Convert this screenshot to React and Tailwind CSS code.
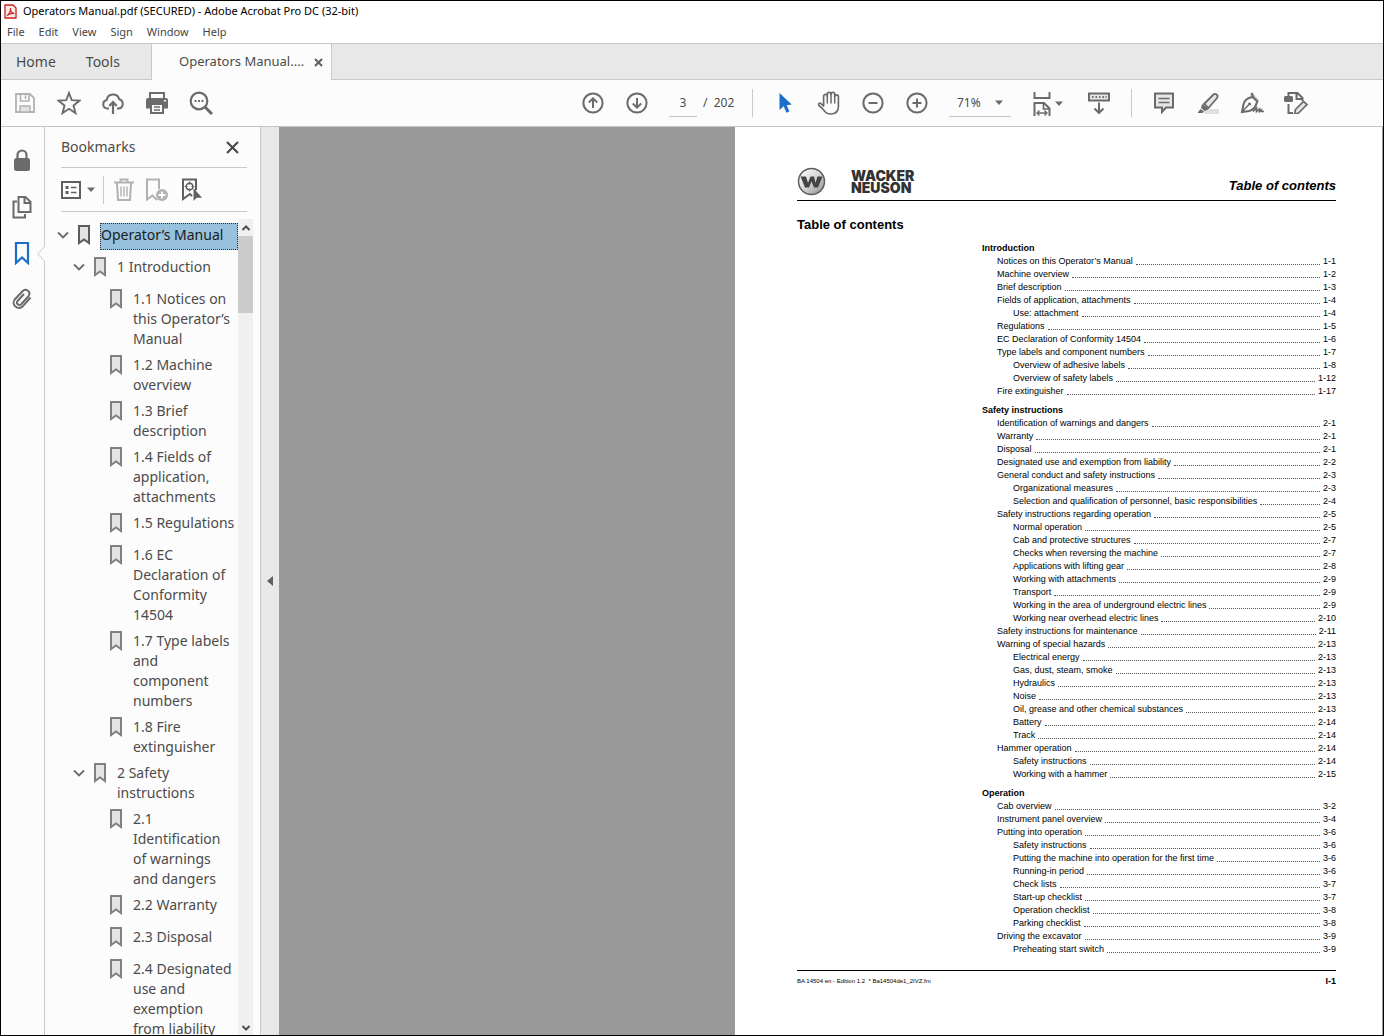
const ui = 'font-["Noto_Sans","Open_Sans",sans-serif]';

function Icon({ w = 24, h = 24, children, className = "" }) {
  return (
    <svg
      width={w}
      height={h}
      viewBox={`0 0 ${w} ${h}`}
      fill="none"
      stroke="currentColor"
      strokeWidth="2"
      aria-hidden="true"
      className={`shrink-0 ${className}`}
    >
      {children}
    </svg>
  );
}

function ToolButton({ label, className = "w-11", children }) {
  return (
    <button
      type="button"
      aria-label={label}
      className={`flex h-11 shrink-0 items-center justify-center text-[#6b6b6b] ${className}`}
    >
      {children}
    </button>
  );
}

function Caret() {
  return (
    <svg width="8" height="5" viewBox="0 0 8 5" aria-hidden="true" className="shrink-0">
      <path d="M0 0.5h8L4 5z" fill="#6b6b6b" />
    </svg>
  );
}

const SaveIcon = () => (
  <Icon w={20} h={20} className="text-[#b1b1b1]">
    <path d="M1 1h14l4 4v14H1z" strokeWidth="1.8" />
    <path d="M5.5 1v7h8.5V1M10.5 2.5v3.5" strokeWidth="1.6" />
    <path d="M5 19v-6h10v6z" fill="#e3e3e3" strokeWidth="1.4" />
  </Icon>
);

const StarIcon = () => (
  <Icon>
    <path d="M12 2l2.7 7.2 7.9.4-6.1 4.9 2 7.6L12 17.8l-6.500 4.300 2-7.600-6.100-4.900 7.900-.400z" strokeWidth="1.900" />
  </Icon>
);

const CloudIcon = () => (
  <Icon w={22} h={22}>
    <path d="M7 16.5H5.300A4.300 4.300 0 0 1 4.700 8a6.400 6.400 0 0 1 12.500-.700 4.700 4.700 0 0 1-.500 9.200H15" />
    <path d="M11 22V10.500M7.300 14l3.700-3.800 3.700 3.800" strokeWidth="2.200" />
  </Icon>
);

const PrintIcon = () => (
  <Icon w={22} h={22}>
    <path d="M4 7V1h14v6" />
    <path d="M2 6h18q2 0 2 2v8.500h-4V12H4v4.500H0V8q0-2 2-2z" fill="currentColor" stroke="none" />
    <rect x="18" y="8" width="2" height="1.500" fill="#fff" stroke="none" />
    <path d="M5 12v9h12v-9z" fill="#fcfcfc" />
    <path d="M8 15h6M8 18h6" strokeWidth="1.300" />
  </Icon>
);

const SearchIcon = () => (
  <Icon>
    <circle cx="10" cy="10" r="8.300" strokeWidth="2.200" />
    <path d="M16 16l7 7" strokeWidth="3" />
    <path d="M5.500 10h2M9 10h2M12.500 10h2" strokeWidth="2" />
  </Icon>
);

const CircleIcon = ({ children }) => (
  <Icon w={22} h={22}>
    <circle cx="11" cy="11" r="9.600" strokeWidth="2" />
    {children}
  </Icon>
);

const CursorIcon = () => (
  <Icon w={14} h={22}>
    <path d="M1.500 1v17l4.200-3.700 2.700 6.500 3-1.300-2.700-6.300 5-.600z" fill="#1b6fc9" stroke="none" />
  </Icon>
);

const HandIcon = () => (
  <Icon>
    <path
      d="M6.600 15V5.300a1.850 1.850 0 0 1 3.700 0V3.200a1.850 1.850 0 0 1 3.700 0a1.850 1.850 0 0 1 3.700 0V5.700a1.850 1.850 0 0 1 3.700 0V15.500c0 4.700-3 7.500-7.700 7.500-4 0-6-2-7.500-4.600L1.800 14.300c-.800-1.600.800-2.700 2.200-1.600z"
      strokeWidth="1.700"
      strokeLinejoin="round"
    />
    <path d="M10.300 5v7.500M14 3v9.500M17.700 5v7.500" strokeWidth="1.500" />
  </Icon>
);

const FitIcon = () => (
  <Icon w={18} h={25}>
    <path d="M1.500 1v6h15V1" />
    <path d="M1.500 25V12h9.500l5.500 5.500V25" />
    <path d="M10.500 12v6h6" strokeWidth="1.700" />
    <path d="M4 22h10M6.500 19.500L4 22l2.500 2.500M11.500 19.500L14 22l-2.500 2.500" strokeWidth="1.400" />
  </Icon>
);

const KeyboardIcon = () => (
  <Icon w={22} h={22}>
    <rect x="1" y="1.500" width="20" height="7" fill="#e6e6e6" />
    <path d="M4 5h1.500M7.500 5H9M11 5h1.500M14.500 5H16M17.500 5h1" />
    <path d="M11 10.500V21M6.500 16.500L11 21l4.500-4.500" />
  </Icon>
);

const CommentIcon = () => (
  <Icon w={20} h={22}>
    <path d="M1 1.500h18v14h-7l-4 4.500v-4.500H1z" fill="#e6e6e6" />
    <path d="M4.500 6.500h11M4.500 10.500h11" strokeWidth="1.500" />
  </Icon>
);

const HighlightIcon = () => (
  <Icon w={24} h={22}>
    <rect x="8" y="17" width="15" height="5" fill="#dfdfdf" stroke="none" />
    <path d="M8 12L17.500 2.500c1.500-1.500 5.500.500 3.500 3.500l-8.500 10z" fill="#e6e6e6" strokeWidth="1.800" />
    <path d="M6.500 12.500l5.500 4.500-3.500 1.500-3-2.500z" fill="currentColor" strokeWidth="1" />
    <path d="M4.500 17l3.500 2.500L6.500 21H1.500z" fill="currentColor" stroke="none" />
  </Icon>
);

const PenIcon = () => (
  <Icon w={24} h={22}>
    <path d="M13 1l6.500 6.500L17 11 9 3.500z" fill="#dfdfdf" stroke="none" />
    <path d="M11.500 1l2 4.500 4.500 4.500" strokeWidth="2.200" />
    <path d="M13 5C7.500 5.500 4.500 8 3.500 12.500L2 20l7-1c4-1 7-4.500 8-9" strokeWidth="2.100" />
    <path d="M2 20l6.500-7" strokeWidth="1.400" />
    <circle cx="9.500" cy="12" r="1.600" fill="currentColor" stroke="none" />
    <path d="M13 19.500l3.500-3.500v3.500l3-2.500v2.500l2-1.500v1.500H24" strokeWidth="1.700" />
  </Icon>
);

const EditPageIcon = () => (
  <Icon w={24} h={22}>
    <path d="M4.500 4V1h9l5 5v3M12.500 1v6h6" />
    <rect x="0" y="4" width="9" height="6" rx="1.500" fill="currentColor" stroke="none" />
    <path d="M4.500 12v9H9" />
    <path d="M11.500 17.500l8-8 3.500 3-8.500 8.500-4 1z" fill="#e6e6e6" strokeWidth="1.700" />
  </Icon>
);

const BookmarkIcon = ({ strong }) => (
  <Icon w={12} h={20} className={strong ? "text-[#5a5a5a]" : "text-[#808080]"}>
    <path d="M1 1h10v17l-5-3.500L1 18z" fill="#e3e3e3" />
  </Icon>
);

const Chevron = () => (
  <Icon w={12} h={8} className="text-[#6b6b6b]">
    <path d="M1 1.500l5 5 5-5" strokeWidth="1.800" />
  </Icon>
);

const bookmarks = [
  { level: 0, text: "Operator’s Manual", open: true, selected: true },
  { level: 1, text: "1 Introduction", open: true },
  { level: 2, text: "1.1 Notices on\nthis Operator’s\nManual" },
  { level: 2, text: "1.2 Machine\noverview" },
  { level: 2, text: "1.3 Brief\ndescription" },
  { level: 2, text: "1.4 Fields of\napplication,\nattachments" },
  { level: 2, text: "1.5 Regulations" },
  { level: 2, text: "1.6 EC\nDeclaration of\nConformity\n14504" },
  { level: 2, text: "1.7 Type labels\nand\ncomponent\nnumbers" },
  { level: 2, text: "1.8 Fire\nextinguisher" },
  { level: 1, text: "2 Safety\ninstructions", open: true },
  { level: 2, text: "2.1\nIdentification\nof warnings\nand dangers" },
  { level: 2, text: "2.2 Warranty" },
  { level: 2, text: "2.3 Disposal" },
  { level: 2, text: "2.4 Designated\nuse and\nexemption\nfrom liability" },
];

const indent = ["pl-3", "pl-7", "pl-11"];

const sections = [
  {
    title: "Introduction",
    rows: [
      [1, "Notices on this Operator’s Manual", "1-1"],
      [1, "Machine overview", "1-2"],
      [1, "Brief description", "1-3"],
      [1, "Fields of application, attachments", "1-4"],
      [2, "Use: attachment", "1-4"],
      [1, "Regulations", "1-5"],
      [1, "EC Declaration of Conformity 14504", "1-6"],
      [1, "Type labels and component numbers", "1-7"],
      [2, "Overview of adhesive labels", "1-8"],
      [2, "Overview of safety labels", "1-12"],
      [1, "Fire extinguisher", "1-17"],
    ],
  },
  {
    title: "Safety instructions",
    rows: [
      [1, "Identification of warnings and dangers", "2-1"],
      [1, "Warranty", "2-1"],
      [1, "Disposal", "2-1"],
      [1, "Designated use and exemption from liability", "2-2"],
      [1, "General conduct and safety instructions", "2-3"],
      [2, "Organizational measures", "2-3"],
      [2, "Selection and qualification of personnel, basic responsibilities", "2-4"],
      [1, "Safety instructions regarding operation", "2-5"],
      [2, "Normal operation", "2-5"],
      [2, "Cab and protective structures", "2-7"],
      [2, "Checks when reversing the machine", "2-7"],
      [2, "Applications with lifting gear", "2-8"],
      [2, "Working with attachments", "2-9"],
      [2, "Transport", "2-9"],
      [2, "Working in the area of underground electric lines", "2-9"],
      [2, "Working near overhead electric lines", "2-10"],
      [1, "Safety instructions for maintenance", "2-11"],
      [1, "Warning of special hazards", "2-13"],
      [2, "Electrical energy", "2-13"],
      [2, "Gas, dust, steam, smoke", "2-13"],
      [2, "Hydraulics", "2-13"],
      [2, "Noise", "2-13"],
      [2, "Oil, grease and other chemical substances", "2-13"],
      [2, "Battery", "2-14"],
      [2, "Track", "2-14"],
      [1, "Hammer operation", "2-14"],
      [2, "Safety instructions", "2-14"],
      [2, "Working with a hammer", "2-15"],
    ],
  },
  {
    title: "Operation",
    rows: [
      [1, "Cab overview", "3-2"],
      [1, "Instrument panel overview", "3-4"],
      [1, "Putting into operation", "3-6"],
      [2, "Safety instructions", "3-6"],
      [2, "Putting the machine into operation for the first time", "3-6"],
      [2, "Running-in period", "3-6"],
      [2, "Check lists", "3-7"],
      [2, "Start-up checklist", "3-7"],
      [2, "Operation checklist", "3-8"],
      [2, "Parking checklist", "3-8"],
      [1, "Driving the excavator", "3-9"],
      [2, "Preheating start switch", "3-9"],
    ],
  },
];

function TitleAndMenu() {
  return (
    <header className="shrink-0 bg-white text-[11px]">
      <div className="flex h-[21px] items-center gap-1.5 pl-[3px] text-black">
        <svg width="13" height="15" viewBox="0 0 13 15" aria-hidden="true">
          <path d="M1 1h8l3 3v10H1z" fill="#fdecec" stroke="#c8201c" strokeWidth="1.300" />
          <path
            d="M3 11.500c2-1 4-4.500 3.500-7.500-.5 3 1.500 5.500 4 5.500-2.500-.600-5 .300-7.500 2z"
            fill="none"
            stroke="#d3231f"
            strokeWidth="1.200"
          />
        </svg>
        <h1 className="whitespace-nowrap">
          Operators Manual.pdf (SECURED) - Adobe Acrobat Pro DC (32-bit)
        </h1>
      </div>
      <nav aria-label="Menu" className="flex h-[21px] items-center gap-3.5 pl-1.5 text-[#444]">
        {["File", "Edit", "View", "Sign", "Window", "Help"].map((m) => (
          <button key={m} type="button">
            {m}
          </button>
        ))}
      </nav>
    </header>
  );
}

function Tabs() {
  return (
    <nav
      aria-label="Tabs"
      className="flex h-[37px] shrink-0 border-t border-[#c9c9c9] bg-[#e8e8e8] text-[#4b4b4b]"
    >
      <div className="flex w-[150px] items-center gap-[30px] border-b border-[#c9c9c9] pl-[15px] text-sm">
        <button type="button">Home</button>
        <button type="button">Tools</button>
      </div>
      <div className="flex w-[181px] items-center justify-between border-x border-[#c9c9c9] bg-[#fcfcfc] pl-[27px] pr-2">
        <button type="button" className="whitespace-nowrap text-[13px]">
          Operators Manual....
        </button>
        <button type="button" aria-label="Close tab" className="text-[#5f5f5f]">
          <Icon w={9} h={9}>
            <path d="M1 1l7 7M8 1L1 8" />
          </Icon>
        </button>
      </div>
      <div className="flex-1 border-b border-[#c9c9c9]" />
    </nav>
  );
}

function Toolbar() {
  return (
    <div
      role="toolbar"
      aria-label="Main toolbar"
      className="flex h-[47px] shrink-0 items-center border-b border-[#c4c4c4] bg-[#fcfcfc] pl-0.5 text-xs text-[#4b4b4b]"
    >
      <ToolButton label="Save"><SaveIcon /></ToolButton>
      <ToolButton label="Add to favorites"><StarIcon /></ToolButton>
      <ToolButton label="Upload"><CloudIcon /></ToolButton>
      <ToolButton label="Print"><PrintIcon /></ToolButton>
      <ToolButton label="Find"><SearchIcon /></ToolButton>
      <div className="grow-[348]" />
      <ToolButton label="Previous page">
        <CircleIcon>
          <path d="M11 16V6.500M6.800 10.500L11 6.300l4.200 4.200" />
        </CircleIcon>
      </ToolButton>
      <ToolButton label="Next page">
        <CircleIcon>
          <path d="M11 6v9.500M6.800 11.500l4.200 4.200 4.200-4.200" />
        </CircleIcon>
      </ToolButton>
      <input
        aria-label="Page number"
        defaultValue="3"
        className="ml-2.5 h-7 w-7 border-b border-[#c4c4c4] bg-transparent text-center"
      />
      <div className="w-[55px] whitespace-pre pl-1.5">/  202</div>
      <div className="h-7 w-px bg-[#c9c9c9]" />
      <div className="ml-2.5 flex">
        <ToolButton label="Select"><CursorIcon /></ToolButton>
        <ToolButton label="Pan"><HandIcon /></ToolButton>
        <ToolButton label="Zoom out">
          <CircleIcon>
            <path d="M6.500 11h9" />
          </CircleIcon>
        </ToolButton>
        <ToolButton label="Zoom in">
          <CircleIcon>
            <path d="M6.500 11h9M11 6.500v9" />
          </CircleIcon>
        </ToolButton>
      </div>
      <label className="ml-2.5 flex h-7 w-[62px] items-center border-b border-[#c4c4c4] pl-2 pr-2">
        <select aria-label="Zoom level" className="min-w-0 flex-1 appearance-none bg-transparent">
          <option>71%</option>
        </select>
        <Caret />
      </label>
      <ToolButton label="Fit page" className="ml-4 w-[42px] gap-1">
        <FitIcon />
        <Caret />
      </ToolButton>
      <ToolButton label="Page display" className="ml-2 w-11"><KeyboardIcon /></ToolButton>
      <div className="ml-2.5 h-7 w-px bg-[#c9c9c9]" />
      <div className="ml-2.5 flex">
        <ToolButton label="Comment"><CommentIcon /></ToolButton>
        <ToolButton label="Highlight"><HighlightIcon /></ToolButton>
        <ToolButton label="Sign"><PenIcon /></ToolButton>
        <ToolButton label="Edit page"><EditPageIcon /></ToolButton>
      </div>
      <div className="grow-[65]" />
    </div>
  );
}

function Rail() {
  return (
    <nav
      aria-label="Panels"
      className="relative flex w-11 shrink-0 flex-col items-center gap-[22px] border-r border-[#c9c9c9] bg-[#fcfcfc] pr-0.5 pt-[22px] text-[#6b6b6b]"
    >
      <button type="button" aria-label="Security">
        <Icon w={18} h={24}>
          <path d="M4.500 11V6a4.500 4.500 0 0 1 9 0v5" strokeWidth="2.200" />
          <rect x="1" y="9" width="16" height="13" rx="2.500" fill="currentColor" stroke="none" />
        </Icon>
      </button>
      <button type="button" aria-label="Page thumbnails">
        <Icon w={20} h={24}>
          <path d="M6.500 2h7l5 5v10h-12zM12.500 2v6h6" />
          <path d="M5 6.500H1.500V22.500H13V19" />
        </Icon>
      </button>
      <button type="button" aria-label="Bookmarks" className="text-[#1b6fc9]">
        <Icon w={16} h={24}>
          <path d="M2 2h12v20l-6-5.500L2 22z" strokeWidth="2.200" />
        </Icon>
      </button>
      <button type="button" aria-label="Attachments">
        <Icon w={22} h={24}>
          <path
            d="M19.500 10.500l-7.800 8.800c-4.500 4.500-12-1.500-8-6.800l7.800-8.300c3.500-3.500 9 .800 6 5l-7.300 8c-2.500 2-5.500-.800-3.700-3.200l6.500-7"
            strokeWidth="2"
          />
        </Icon>
      </button>
      <svg width="8" height="16" viewBox="0 0 8 16" className="absolute -right-px top-[119px]" aria-hidden="true">
        <path d="M8 0L0.700 8 8 16" fill="#fcfcfc" stroke="#c9c9c9" />
      </svg>
    </nav>
  );
}

function BookmarksPanel() {
  return (
    <aside className="flex w-[216px] shrink-0 flex-col border-r border-[#c9c9c9] bg-[#fcfcfc] text-[#4b4b4b]">
      <div className="ml-4 mr-[13px] flex h-[41px] shrink-0 items-center justify-between border-b border-[#c9c9c9] pr-2">
        <h2 className="text-sm">Bookmarks</h2>
        <button type="button" aria-label="Close panel">
          <Icon w={13} h={13}>
            <path d="M1 1l11 11M12 1L1 12" strokeWidth="2.200" />
          </Icon>
        </button>
      </div>
      <div className="ml-4 mr-[13px] flex h-11 shrink-0 items-center border-b border-[#c9c9c9] text-[#5f5f5f]">
        <button type="button" aria-label="Options" className="flex items-center gap-1.5">
          <Icon w={20} h={18}>
            <rect x="1" y="1" width="18" height="16" />
            <path d="M4.500 6.500h3M4.500 11.500h3" strokeWidth="3" />
            <path d="M10 6.500h5.500M10 11.500h5.500" strokeWidth="1.600" />
          </Icon>
          <Caret />
        </button>
        <div className="ml-2 h-7 w-px bg-[#c9c9c9]" />
        <button type="button" aria-label="Delete bookmark" className="ml-2.5 text-[#b1b1b1]">
          <Icon w={20} h={24}>
            <path d="M0 4.500h20M6.500 4V1.500h7V4M3 5l1 17h12L17 5" />
            <path d="M7 8.500v10M10 8.500v10M13 8.500v10" strokeWidth="1.400" />
          </Icon>
        </button>
        <button type="button" aria-label="New bookmark" className="ml-3 text-[#b1b1b1]">
          <Icon w={22} h={24}>
            <path d="M11 22l-4.500-4.500L1 21.500V1.500h12V11" />
            <circle cx="16" cy="17" r="6" fill="currentColor" stroke="none" />
            <path d="M12.500 17h7M16 13.500v7" stroke="#fff" strokeWidth="1.800" />
          </Icon>
        </button>
        <button type="button" aria-label="Find current bookmark" className="ml-3.5">
          <Icon w={21} h={24}>
            <path d="M10 18l-2-2-7 5V1.500h13V12" />
            <circle cx="7.500" cy="8.500" r="3.300" strokeWidth="1.400" />
            <path d="M7.500 3.500v3M7.500 10.500v3M2.500 8.500h3M9.500 8.500h3" strokeWidth="1.200" />
            <path d="M11.500 10v13l3.200-3.200H20z" fill="currentColor" stroke="none" />
          </Icon>
        </button>
      </div>
      <div className="mr-[7px] mt-[7px] flex min-h-0 flex-1">
        <ul className="min-w-0 flex-1 overflow-hidden pt-[3px] text-sm">
          {bookmarks.map((b) => (
            <li key={b.text} className={`flex min-h-8 items-start py-[3px] ${indent[b.level]}`}>
              <span className="flex h-5 w-[21px] shrink-0 items-center">
                {b.open && (
                  <button type="button" aria-label="Collapse" className="block">
                    <Chevron />
                  </button>
                )}
              </span>
              <BookmarkIcon strong={b.selected} />
              <a
                href="#toc"
                className={
                  b.selected
                    ? "-mt-0.5 ml-2.5 flex-1 whitespace-nowrap border border-dotted border-[#333] bg-[#97c1dc] pb-1 pt-px leading-5 text-[#1b1b1b]"
                    : "ml-[11px] whitespace-pre leading-5"
                }
              >
                {b.text}
              </a>
            </li>
          ))}
        </ul>
        <div className="flex w-[15px] shrink-0 flex-col items-center bg-[#f0f0f0] text-[#505050]">
          <span className="flex h-[17px] items-center">
            <Icon w={8} h={6}>
              <path d="M0.500 5L4 1.500 7.500 5" />
            </Icon>
          </span>
          <span className="h-[77px] w-full bg-[#cbcbcb]" />
          <span className="mt-auto flex h-[15px] items-center">
            <Icon w={8} h={6}>
              <path d="M0.500 1L4 4.500 7.500 1" />
            </Icon>
          </span>
        </div>
      </div>
    </aside>
  );
}

function Logo() {
  return (
    <div className="flex items-center gap-[25px]">
      <svg width="29" height="29" viewBox="0 0 29 29" aria-hidden="true">
        <defs>
          <linearGradient id="disc" x1="0" y1="0" x2="1" y2="1">
            <stop offset="0" stopColor="#ffffff" />
            <stop offset="0.5" stopColor="#d6d6d6" />
            <stop offset="1" stopColor="#8a8a8a" />
          </linearGradient>
        </defs>
        <circle cx="14.500" cy="14.500" r="13" fill="url(#disc)" stroke="#5c5c5c" strokeWidth="1.500" />
        <path
          d="M3.500 9.500h5.500l2 6.500 2.500-6.500h3.500l1.500 6.500 2-6.500h5L21 20.500h-4l-2.500-6-2.500 6H8z"
          fill="#444"
        />
      </svg>
      <p className='font-["Inter","Liberation_Sans",sans-serif] text-sm font-black leading-3 text-[#333]'>
        WACKER
        <br />
        NEUSON
      </p>
    </div>
  );
}

function DocumentPage() {
  return (
    <div className='pl-[62px] pr-[46px] font-["Liberation_Sans_Narrow","Arial_Narrow","Liberation_Sans",sans-serif] text-black'>
      <div className="flex h-[74px] items-end justify-between border-b border-black pb-1">
        <Logo />
        <p className="text-[13px] font-bold italic leading-5">Table of contents</p>
      </div>
      <h2 className="mt-3.5 text-[13px] font-bold leading-5">Table of contents</h2>
      <div id="toc" className="ml-[185px] mt-[7px] text-[9px] leading-[13px]">
        {sections.map((s) => (
          <section key={s.title} className="mb-1.5">
            <h3 className="font-bold">{s.title}</h3>
            <ul>
              {s.rows.map(([level, text, page]) => (
                <li key={text}>
                  <a href="#toc" className={`flex gap-[3px] whitespace-nowrap ${level === 1 ? "pl-[15px]" : "pl-[31px]"}`}>
                    <span>{text}</span>
                    <span className="mb-[3px] flex-1 border-b border-dotted border-[#555]" />
                    <span>{page}</span>
                  </a>
                </li>
              ))}
            </ul>
          </section>
        ))}
      </div>
      <footer className="mt-3.5 flex items-center justify-between border-t border-black pt-0.5 leading-4">
        <span className="whitespace-pre text-[6px]">BA 14504 en - Edition 1.2  * Ba14504de1_2IVZ.fm</span>
        <span className="text-[9px] font-bold">I-1</span>
      </footer>
    </div>
  );
}

export default function App() {
  return (
    <div className={`flex h-screen flex-col overflow-hidden border border-black bg-white ${ui}`}>
      <TitleAndMenu />
      <Tabs />
      <Toolbar />
      <div className="flex min-h-0 flex-1">
        <Rail />
        <BookmarksPanel />
        <button
          type="button"
          aria-label="Collapse panel"
          className="flex w-[18px] shrink-0 items-center justify-center bg-[#e8e8e8]"
        >
          <svg width="6" height="10" viewBox="0 0 6 10" aria-hidden="true">
            <path d="M6 0v10L0 5z" fill="#5f5f5f" />
          </svg>
        </button>
        <div className="grow-[456] basis-0 bg-[#999]" />
        <main className="min-w-0 grow-[647] basis-0 overflow-hidden border-r border-[#9b9b9b] bg-white">
          <DocumentPage />
        </main>
      </div>
    </div>
  );
}
